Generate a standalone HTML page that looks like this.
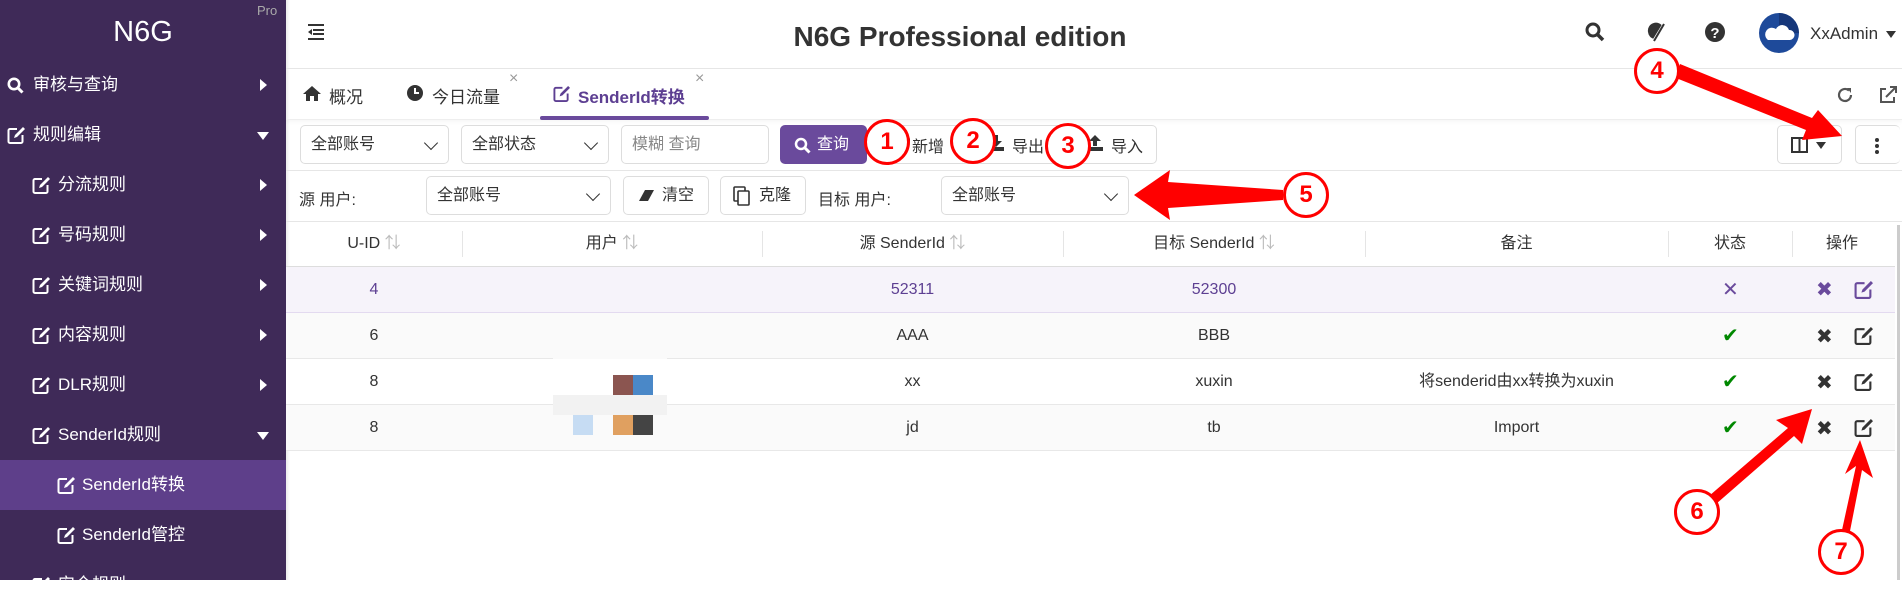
<!DOCTYPE html>
<html><head><meta charset="utf-8"><style>
*{box-sizing:border-box;margin:0;padding:0}
body{width:1902px;height:580px;overflow:hidden;background:#fff;font-family:"Liberation Sans","Noto Sans CJK SC",sans-serif;color:#333;position:relative}
.a{position:absolute}
#side{left:0;top:0;width:286px;height:580px;background:#3f2a58;color:#fff}
.mi{position:absolute;left:0;width:286px;height:50px;font-size:17px;line-height:50px;color:#fff}
.mi .ic{position:absolute;top:16px;width:18px;height:18px}
.mi .ar{position:absolute;left:260px;top:19px;width:0;height:0;border-top:6px solid transparent;border-bottom:6px solid transparent;border-left:7px solid #fff}
.mi .dn{position:absolute;left:257px;top:22px;border-left:6px solid transparent;border-right:6px solid transparent;border-top:8px solid #fff}
.btn{position:absolute;border:1px solid #ddd;border-radius:5px;height:39px;top:125px;font-size:16px;line-height:37px;background:#fff}
.sel{position:absolute;border:1px solid #ddd;border-radius:5px;height:39px;font-size:16px;line-height:37px;padding-left:10px;background:#fff}
.chev{position:absolute;right:12px;top:12px;width:10px;height:10px;border-right:1.5px solid #333;border-bottom:1.5px solid #333;transform:rotate(45deg)}
.th{position:absolute;top:221px;height:46px;line-height:46px;font-size:16px;text-align:center;color:#333}
.sep{position:absolute;top:231px;width:1px;height:26px;background:#e5e5e5}
.row{position:absolute;left:286px;width:1609px;height:46px;border-bottom:1px solid #e8e8e8;font-size:16px}
.c{position:absolute;top:0;line-height:46px;text-align:center}
.circ{position:absolute;width:46px;height:46px;border:3.5px solid #f00;border-radius:50%;background:#fff;color:#f00;font-weight:bold;font-size:24px;line-height:39px;text-align:center}
.ck{position:absolute;font-size:20px;color:#080}
</style></head><body>
<svg width="0" height="0" style="position:absolute"><defs>
<symbol id="ed" viewBox="0 0 18 18"><path d="M10 3H3a1.5 1.5 0 0 0-1.5 1.5v11A1.5 1.5 0 0 0 3 17h11a1.5 1.5 0 0 0 1.5-1.5V9" fill="none" stroke="currentColor" stroke-width="2"/><path d="M7 12l1-3l8-8l2 2l-8 8z" fill="currentColor"/></symbol>
</defs></svg>
<div id="side" class="a">
 <div class="a" style="left:0;top:10px;width:286px;text-align:center;font-size:29px;line-height:44px">N6G</div>
 <div class="a" style="left:257px;top:3px;font-size:13px;color:#aaa">Pro</div>
 <div class="mi" style="top:60px"><svg class="a" style="left:7px;top:17px" width="17" height="17" viewBox="0 0 17 17"><circle cx="7" cy="7" r="5.2" fill="none" stroke="#fff" stroke-width="2.6"/><path d="M11 11l4.5 4.5" stroke="#fff" stroke-width="3"/></svg><span style="position:absolute;left:33px">审核与查询</span><i class="ar"></i></div>
 <div class="mi" style="top:110px"><svg class="ic" style="left:7px;color:#fff"><use href="#ed"/></svg><span style="position:absolute;left:33px">规则编辑</span><i class="dn"></i></div>
 <div class="mi" style="top:160px"><svg class="ic" style="left:32px;color:#fff"><use href="#ed"/></svg><span style="position:absolute;left:58px">分流规则</span><i class="ar"></i></div>
 <div class="mi" style="top:210px"><svg class="ic" style="left:32px;color:#fff"><use href="#ed"/></svg><span style="position:absolute;left:58px">号码规则</span><i class="ar"></i></div>
 <div class="mi" style="top:260px"><svg class="ic" style="left:32px;color:#fff"><use href="#ed"/></svg><span style="position:absolute;left:58px">关键词规则</span><i class="ar"></i></div>
 <div class="mi" style="top:310px"><svg class="ic" style="left:32px;color:#fff"><use href="#ed"/></svg><span style="position:absolute;left:58px">内容规则</span><i class="ar"></i></div>
 <div class="mi" style="top:360px"><svg class="ic" style="left:32px;color:#fff"><use href="#ed"/></svg><span style="position:absolute;left:58px">DLR规则</span><i class="ar"></i></div>
 <div class="mi" style="top:410px"><svg class="ic" style="left:32px;color:#fff"><use href="#ed"/></svg><span style="position:absolute;left:58px">SenderId规则</span><i class="dn"></i></div>
 <div class="mi" style="top:460px;background:#5e3f8a"><svg class="ic" style="left:57px;color:#fff"><use href="#ed"/></svg><span style="position:absolute;left:82px">SenderId转换</span></div>
 <div class="mi" style="top:510px"><svg class="ic" style="left:57px;color:#fff"><use href="#ed"/></svg><span style="position:absolute;left:82px">SenderId管控</span></div>
 <div class="mi" style="top:560px"><svg class="ic" style="left:32px;color:#fff"><use href="#ed"/></svg><span style="position:absolute;left:58px">安全规则</span><i class="dn"></i></div>
</div>
<div class="a" style="left:286px;top:0;width:4px;height:580px;background:linear-gradient(90deg,rgba(0,0,0,.08),rgba(0,0,0,0))"></div>
<!-- header -->
<div class="a" style="left:286px;top:68px;width:1616px;height:1px;background:#e6e6e6"></div>
<svg class="a" style="left:308px;top:24px" width="18" height="16"><path d="M0 1h16M5 6h11M5 10h11M0 15h16" stroke="#333" stroke-width="2"/><path d="M4 5l-4 3l4 3z" fill="#333"/></svg>
<div class="a" style="left:700px;top:21px;width:520px;text-align:center;font-size:28px;font-weight:bold;color:#333">N6G Professional edition</div>
<svg class="a" style="left:1585px;top:22px" width="20" height="20"><circle cx="8" cy="8" r="6" fill="none" stroke="#333" stroke-width="3"/><path d="M12.5 12.5l5.5 5.5" stroke="#333" stroke-width="3.5"/></svg>
<svg class="a" style="left:1645px;top:21px" width="22" height="22"><path d="M3 11a8 8 0 0 1 15-5l-9 12a8 8 0 0 1-6-7z" fill="#333"/><path d="M8 21l11-18" stroke="#fff" stroke-width="3"/><path d="M9 20l10-17" stroke="#333" stroke-width="2"/></svg>
<svg class="a" style="left:1705px;top:22px" width="20" height="20"><circle cx="10" cy="10" r="10" fill="#333"/><text x="10" y="16" text-anchor="middle" font-size="15" font-weight="bold" fill="#fff" font-family="Liberation Sans">?</text></svg>
<svg class="a" style="left:1759px;top:13px" width="40" height="40"><circle cx="20" cy="20" r="20" fill="#1e4a9a"/><path d="M20 0a20 20 0 0 1 20 20l-20 0z" fill="#16377a"/><path d="M9 27h22a5 5 0 0 0-1-10a7 7 0 0 0-13-1a5 5 0 0 0-8 11z" fill="#fff"/></svg>
<div class="a" style="left:1810px;top:24px;font-size:17px;color:#333">XxAdmin</div>
<div class="a" style="left:1886px;top:31px;border-left:5px solid transparent;border-right:5px solid transparent;border-top:7px solid #333"></div>
<!-- tabs -->
<div class="a" style="left:286px;top:69px;width:1616px;height:51px;border-bottom:1px solid #eee;box-shadow:0 2px 4px rgba(0,0,0,.04)"></div>
<svg class="a" style="left:303px;top:86px" width="18" height="15"><path d="M9 0l9 8h-3v7h-4v-5h-4v5h-4v-7h-3z" fill="#333"/></svg>
<div class="a" style="left:329px;top:83px;font-size:17px">概况</div>
<svg class="a" style="left:407px;top:85px" width="16" height="16"><circle cx="8" cy="8" r="8" fill="#333"/><path d="M8 3v5h4" stroke="#fff" stroke-width="2" fill="none"/></svg>
<div class="a" style="left:432px;top:83px;font-size:17px">今日流量</div>
<div class="a" style="left:509px;top:70px;font-size:16px;color:#999">×</div>
<svg class="a" style="left:553px;top:85px;color:#5d3f92" width="17" height="17"><use href="#ed"/></svg>
<div class="a" style="left:578px;top:83px;font-size:17px;font-weight:bold;color:#5d3f92">SenderId转换</div>
<div class="a" style="left:695px;top:70px;font-size:16px;color:#999">×</div>
<div class="a" style="left:540px;top:116px;width:169px;height:4px;border-radius:2px;background:#6a4a9c"></div>
<svg class="a" style="left:1836px;top:86px" width="18" height="18"><path d="M15 9a6 6 0 1 1-2-4.5" fill="none" stroke="#555" stroke-width="2.2"/><path d="M11 2l4 0l0 5z" fill="#555"/></svg>
<svg class="a" style="left:1879px;top:86px" width="18" height="18"><path d="M7 3h-5v13h13v-5" fill="none" stroke="#555" stroke-width="2"/><path d="M7 11l9-9M11 1h6v6" stroke="#555" stroke-width="2" fill="none"/></svg>
<!-- toolbar -->
<div class="a" style="left:286px;top:170px;width:1616px;height:1px;background:#e6e6e6"></div>
<div class="sel" style="left:300px;top:125px;width:149px">全部账号<i class="chev"></i></div>
<div class="sel" style="left:461px;top:125px;width:148px">全部状态<i class="chev"></i></div>
<div class="sel" style="left:621px;top:125px;width:148px;color:#888">模糊 查询</div>
<div class="btn" style="left:780px;width:87px;background:#6a4a9c;border-color:#6a4a9c;color:#fff;padding-left:14px"><svg style="position:absolute;left:13px;top:11px" width="17" height="17"><circle cx="7" cy="7" r="5" fill="none" stroke="#fff" stroke-width="2.5"/><path d="M10.5 10.5l5 5" stroke="#fff" stroke-width="3"/></svg><span style="position:absolute;left:36px">查询</span></div>
<div class="btn" style="left:877px;width:280px"></div>
<div class="a" style="left:974px;top:126px;width:1px;height:37px;background:#ddd"></div>
<div class="a" style="left:1072px;top:126px;width:1px;height:37px;background:#ddd"></div>
<div class="a" style="left:912px;top:133px;font-size:16px">新增</div>
<div class="a" style="left:1012px;top:133px;font-size:16px">导出</div>
<div class="a" style="left:1111px;top:133px;font-size:16px">导入</div>
<svg class="a" style="left:1087px;top:135px" width="16" height="16"><path d="M8 0l6 6h-4v5h-4v-5h-4zM0 12h16v4h-16z" fill="#333"/></svg>
<svg class="a" style="left:988px;top:135px" width="16" height="16"><path d="M6 0h4v6h4l-6 6l-6-6h4zM0 12h16v4h-16z" fill="#333"/></svg>
<div class="btn" style="left:1777px;width:65px"><svg style="position:absolute;left:13px;top:11px" width="18" height="16"><rect x="1" y="1" width="15" height="14" fill="none" stroke="#333" stroke-width="2"/><path d="M8.5 1v14" stroke="#333" stroke-width="2"/></svg><i style="position:absolute;left:38px;top:16px;border-left:5px solid transparent;border-right:5px solid transparent;border-top:7px solid #333"></i></div>
<div class="btn" style="left:1855px;width:45px;border-right:none"><svg style="position:absolute;left:18px;top:11px" width="6" height="18"><circle cx="3" cy="3" r="2" fill="#333"/><circle cx="3" cy="9" r="2" fill="#333"/><circle cx="3" cy="15" r="2" fill="#333"/></svg></div>
<!-- row 2 -->
<div class="a" style="left:286px;top:221px;width:1616px;height:1px;background:#e6e6e6"></div>
<div class="a" style="left:299px;top:186px;font-size:16px">源 用户:</div>
<div class="sel" style="left:426px;top:176px;width:185px">全部账号<i class="chev"></i></div>
<div class="btn" style="left:623px;top:176px;width:86px"><svg style="position:absolute;left:13px;top:12px" width="18" height="14"><path d="M8 1h9l-6 11h-9z" fill="#333"/></svg><span style="position:absolute;left:38px">清空</span></div>
<div class="btn" style="left:720px;top:176px;width:86px"><svg style="position:absolute;left:12px;top:9px" width="18" height="20"><rect x="1" y="1" width="11" height="14" rx="1" fill="none" stroke="#333" stroke-width="1.6"/><rect x="5" y="5" width="11" height="14" rx="1" fill="#fff" stroke="#333" stroke-width="1.6"/></svg><span style="position:absolute;left:38px">克隆</span></div>
<div class="a" style="left:818px;top:186px;font-size:16px">目标 用户:</div>
<div class="sel" style="left:941px;top:176px;width:188px">全部账号<i class="chev"></i></div>
<!-- table header -->
<div class="th" style="left:286px;width:176px">U-ID <span style="color:#bbb">⇅</span></div>
<div class="sep" style="left:462px"></div>
<div class="th" style="left:462px;width:300px">用户 <span style="color:#bbb">⇅</span></div>
<div class="sep" style="left:762px"></div>
<div class="th" style="left:762px;width:301px">源 SenderId <span style="color:#bbb">⇅</span></div>
<div class="sep" style="left:1063px"></div>
<div class="th" style="left:1063px;width:302px">目标 SenderId <span style="color:#bbb">⇅</span></div>
<div class="sep" style="left:1365px"></div>
<div class="th" style="left:1365px;width:303px">备注</div>
<div class="sep" style="left:1668px"></div>
<div class="th" style="left:1668px;width:124px">状态</div>
<div class="sep" style="left:1792px"></div>
<div class="th" style="left:1792px;width:100px">操作</div>
<div class="a" style="left:286px;top:266px;width:1609px;height:1px;background:#ddd"></div>
<div class="a" style="left:1897px;top:225px;width:3px;height:355px;background:#ccc"></div>
<!-- rows -->
<div class="row" style="top:267px;background:#f6f3fa;color:#5d3f92;border-bottom-color:#e3daf0">
 <div class="c" style="left:0;width:176px">4</div><div class="c" style="left:476px;width:301px">52311</div><div class="c" style="left:777px;width:302px">52300</div>
 <div class="c" style="left:1436px;font-size:20px;color:#6a4a9c">✕</div>
 <div class="c" style="left:1530px;font-size:20px;color:#6a4a9c">✖</div>
 <svg class="a" style="left:1568px;top:13px;color:#6a4a9c" width="19" height="19"><use href="#ed"/></svg>
</div>
<div class="row" style="top:313px;background:#fafafa"><div class="c" style="left:0;width:176px">6</div><div class="c" style="left:476px;width:301px">AAA</div><div class="c" style="left:777px;width:302px">BBB</div></div>
<div class="row" style="top:359px;background:#fff"><div class="c" style="left:0;width:176px">8</div><div class="c" style="left:476px;width:301px">xx</div><div class="c" style="left:777px;width:302px">xuxin</div><div class="c" style="left:1079px;width:303px">将senderid由xx转换为xuxin</div></div>
<div class="row" style="top:405px;background:#fafafa"><div class="c" style="left:0;width:176px">8</div><div class="c" style="left:476px;width:301px">jd</div><div class="c" style="left:777px;width:302px">tb</div><div class="c" style="left:1079px;width:303px">Import</div></div>
<div class="ck" style="left:1722px;top:323px">✔</div>
<div class="ck" style="left:1722px;top:369px">✔</div>
<div class="ck" style="left:1722px;top:415px">✔</div>
<div class="a" style="left:1816px;top:324px;font-size:20px;color:#333">✖</div>
<div class="a" style="left:1816px;top:370px;font-size:20px;color:#333">✖</div>
<div class="a" style="left:1816px;top:416px;font-size:20px;color:#333">✖</div>
<svg class="a" style="left:1854px;top:326px" width="19" height="19"><use href="#ed"/></svg>
<svg class="a" style="left:1854px;top:372px" width="19" height="19"><use href="#ed"/></svg>
<svg class="a" style="left:1854px;top:418px" width="19" height="19"><use href="#ed"/></svg>
<!-- blurred user -->
<div class="a" style="left:553px;top:313px;width:114px;height:46px;background:#fafafa"></div>
<div class="a" style="left:553px;top:359px;width:114px;height:36px;background:#fff"></div>
<div class="a" style="left:553px;top:395px;width:114px;height:20px;background:#f2f2f2"></div>
<div class="a" style="left:613px;top:375px;width:20px;height:20px;background:#8b5550"></div>
<div class="a" style="left:633px;top:375px;width:20px;height:20px;background:#4a88c8"></div>
<div class="a" style="left:573px;top:415px;width:20px;height:20px;background:#c6dcf3"></div>
<div class="a" style="left:613px;top:415px;width:20px;height:20px;background:#e0a060"></div>
<div class="a" style="left:633px;top:415px;width:20px;height:20px;background:#444"></div>
<!-- annotations -->
<svg class="a" style="left:0;top:0" width="1902" height="580">
<path d="M1680 64L1812 118L1818 110L1842 136L1802 140L1806 130L1676 78Z" fill="#f00"/>
<path d="M1283 190L1168 182L1170 170L1134 195L1170 220L1168 208L1283 200Z" fill="#f00"/>
<path d="M1709 496L1788 428L1776 420L1812 409L1802 444L1794 436L1716 504Z" fill="#f00"/>
<path d="M1842 530L1856 466L1845 474L1860 440L1873 478L1862 470L1850 531Z" fill="#f00"/>
<path d="M898 140h12M904 134v12" stroke="#333" stroke-width="3"/>
</svg>
<div class="circ" style="left:864px;top:119px">1</div>
<div class="circ" style="left:950px;top:118px">2</div>
<div class="circ" style="left:1045px;top:123px">3</div>
<div class="circ" style="left:1634px;top:48px">4</div>
<div class="circ" style="left:1283px;top:172px">5</div>
<div class="circ" style="left:1674px;top:489px">6</div>
<div class="circ" style="left:1818px;top:529px">7</div>
</body></html>
